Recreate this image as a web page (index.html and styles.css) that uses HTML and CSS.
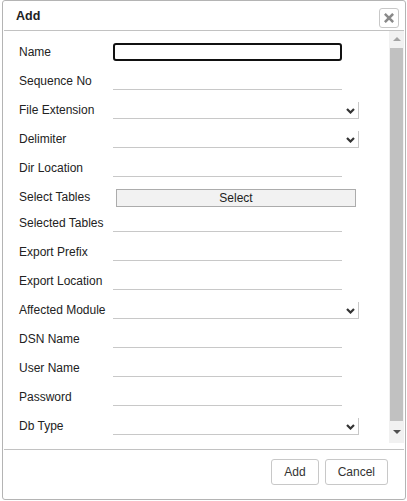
FILE: index.html
```html
<!DOCTYPE html>
<html>
<head>
<meta charset="utf-8">
<link rel="stylesheet" href="styles.css">
</head>
<body>
<div class="dialog">
  <div class="titlebar">
    <span class="title">Add</span>
    <button class="close" type="button" aria-label="Close">
      <svg width="10" height="10" viewBox="0 0 10 10"><path d="M1.8 1.8 L8.2 8.2 M8.2 1.8 L1.8 8.2" stroke="#8a8a8a" stroke-width="2.6" stroke-linecap="square"/></svg>
    </button>
  </div>
  <div class="content">
    <div class="form">
      <div class="row"><label class="label">Name</label><input class="field focused" type="text"></div>
      <div class="row"><label class="label">Sequence No</label><input class="field" type="text"></div>
      <div class="row"><label class="label">File Extension</label><div class="select"><span class="field"></span><span class="arrow"><svg width="9" height="6" viewBox="0 0 9 6"><path d="M1 1 L4.5 4.5 L8 1" fill="none" stroke="#333" stroke-width="2.2"/></svg></span></div></div>
      <div class="row"><label class="label">Delimiter</label><div class="select"><span class="field"></span><span class="arrow"><svg width="9" height="6" viewBox="0 0 9 6"><path d="M1 1 L4.5 4.5 L8 1" fill="none" stroke="#333" stroke-width="2.2"/></svg></span></div></div>
      <div class="row"><label class="label">Dir Location</label><input class="field" type="text"></div>
      <div class="row short"><label class="label">Select Tables</label><button class="pick" type="button">Select</button></div>
      <div class="row"><label class="label">Selected Tables</label><input class="field" type="text"></div>
      <div class="row"><label class="label">Export Prefix</label><input class="field" type="text"></div>
      <div class="row"><label class="label">Export Location</label><input class="field" type="text"></div>
      <div class="row"><label class="label">Affected Module</label><div class="select"><span class="field"></span><span class="arrow"><svg width="9" height="6" viewBox="0 0 9 6"><path d="M1 1 L4.5 4.5 L8 1" fill="none" stroke="#333" stroke-width="2.2"/></svg></span></div></div>
      <div class="row"><label class="label">DSN Name</label><input class="field" type="text"></div>
      <div class="row"><label class="label">User Name</label><input class="field" type="text"></div>
      <div class="row"><label class="label">Password</label><input class="field" type="password"></div>
      <div class="row"><label class="label">Db Type</label><div class="select"><span class="field"></span><span class="arrow"><svg width="9" height="6" viewBox="0 0 9 6"><path d="M1 1 L4.5 4.5 L8 1" fill="none" stroke="#333" stroke-width="2.2"/></svg></span></div></div>
    </div>
    <div class="scrollbar">
      <div class="sb-btn"><span class="tri-up"></span></div>
      <div class="thumb"></div>
      <div class="sb-btn down"><span class="tri-down"></span></div>
    </div>
  </div>
  <div class="buttonpane">
    <button class="btn" type="button">Add</button>
    <button class="btn" type="button">Cancel</button>
  </div>
</div>
</body>
</html>
```
FILE: styles.css
```css
* { box-sizing: border-box; }
html, body { margin: 0; padding: 0; background: #fff; }
body {
  font-family: "Liberation Sans", Arial, sans-serif;
  font-size: 12px;
  color: #222;
}
.dialog {
  width: 404px;
  height: 500px;
  margin-left: 2px;
  border: 1px solid #b4b4b4;
  border-radius: 3px;
  padding: 0 1px;
  display: flex;
  flex-direction: column;
  background: #fff;
}
.titlebar {
  height: 30px;
  flex: none;
  border-bottom: 1px solid #c2c2c2;
  display: flex;
  align-items: center;
  padding: 0 5px 0 12px;
}
.title {
  font-weight: bold;
  font-size: 12.5px;
  color: #222;
  flex: 1;
  margin-top: 1px;
}
.close {
  width: 20px;
  height: 20px;
  border: 1px solid #c8c8c8;
  border-radius: 3px;
  background: #fff;
  padding: 0;
  margin-top: 4px;
  display: flex;
  align-items: center;
  justify-content: center;
}
.content {
  height: 412px;
  flex: none;
  display: flex;
}
.form {
  flex: 1;
  overflow: hidden;
  padding: 6px 0 0 15px;
}
.row {
  height: 29px;
  display: flex;
  align-items: flex-start;
}
.row.short { height: 26px; }
.label {
  width: 94px;
  flex: none;
  margin-top: 7px;
  line-height: 16px;
  color: #222;
}
.field {
  display: block;
  width: 229px;
  height: 18px;
  margin: 6px 0 0 0;
  border: 0;
  border-bottom: 1px solid #c8c8c8;
  padding: 0 2px;
  font: inherit;
  background: transparent;
  outline: none;
}
.field.focused {
  border: 2px solid #111;
  border-radius: 3px;
}
.select {
  display: flex;
  align-items: flex-end;
}
.select .arrow {
  width: 17px;
  height: 17px;
  border-right: 1px solid #c8c8c8;
  border-bottom: 1px solid #c8c8c8;
  display: flex;
  align-items: center;
  justify-content: center;
  padding-top: 1px;
}
.pick {
  margin: 7px 0 0 3px;
  width: 240px;
  height: 18px;
  border: 1px solid #acacac;
  background: #f2f2f2;
  font: inherit;
  color: #222;
  padding: 0;
  line-height: 16px;
}
.scrollbar {
  width: 15px;
  flex: none;
  background: #f1f1f1;
  display: flex;
  flex-direction: column;
  align-items: center;
}
.sb-btn {
  height: 17px;
  width: 100%;
  flex: none;
  display: flex;
  align-items: center;
  justify-content: center;
}
.sb-btn.down { height: 22px; }
.tri-up {
  width: 0; height: 0;
  border-left: 4px solid transparent;
  border-right: 4px solid transparent;
  border-bottom: 4px solid #a3a3a3;
  margin-bottom: 1px;
}
.tri-down {
  width: 0; height: 0;
  border-left: 4px solid transparent;
  border-right: 4px solid transparent;
  border-top: 4px solid #505050;
}
.thumb {
  flex: 1;
  width: 13px;
  background: #c1c1c1;
}
.buttonpane {
  flex: none;
  margin-top: 6px;
  border-top: 1px solid #c2c2c2;
  padding: 9px 16px 0 0;
  display: flex;
  justify-content: flex-end;
  gap: 6px;
}
.btn {
  height: 26px;
  padding: 0 12px;
  border: 1px solid #c8c8c8;
  border-radius: 3px;
  background: #fff;
  font: inherit;
  color: #333;
}
```
